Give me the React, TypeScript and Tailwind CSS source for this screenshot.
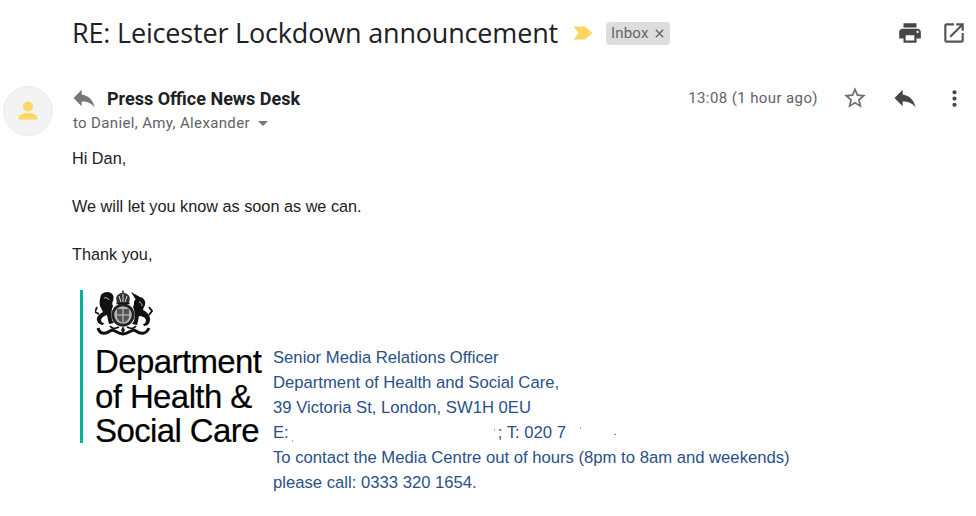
import React from "react";

const Icon = ({ d, size, color, className = "" }: { d: string; size: number; color: string; className?: string }) => (
  <svg width={size} height={size} viewBox="0 0 24 24" fill={color} className={className}>
    <path d={d} />
  </svg>
);

const REPLY = "M10 9V5l-7 7 7 7v-4.1c5 0 8.5 1.6 11 5.1-1-5-4-10-11-11z";
const STAR = "M22 9.24l-7.19-.62L12 2 9.19 8.63 2 9.24l5.46 4.73L5.82 21 12 17.27 18.18 21l-1.63-7.03L22 9.24zM12 15.4l-3.76 2.27 1-4.28-3.32-2.88 4.38-.38L12 6.1l1.71 4.04 4.38.38-3.32 2.88 1 4.28L12 15.4z";
const MORE = "M12 8c1.1 0 2-.9 2-2s-.9-2-2-2-2 .9-2 2 .9 2 2 2zm0 2c-1.1 0-2 .9-2 2s.9 2 2 2 2-.9 2-2-.9-2-2-2zm0 6c-1.1 0-2 .9-2 2s.9 2 2 2 2-.9 2-2-.9-2-2-2z";
const PRINT = "M19 8H5c-1.66 0-3 1.34-3 3v6h4v4h12v-4h4v-6c0-1.66-1.34-3-3-3zm-3 11H8v-5h8v5zm3-7c-.55 0-1-.45-1-1s.45-1 1-1 1 .45 1 1-.45 1-1 1zm-1-9H6v4h12V3z";
const OPEN = "M19 19H5V5h7V3H5c-1.11 0-2 .9-2 2v14c0 1.1.89 2 2 2h14c1.1 0 2-.9 2-2v-7h-2v7zM14 3v2h3.59l-9.83 9.83 1.41 1.41L19 6.41V10h2V3h-7z";

const Crest = () => (
  <svg width="58" height="50" viewBox="0 0 58 50" className="block blur-[0.3px]">
    {/* crown */}
    <path d="M28 0 l1.200 2 l-0.800 1 c3 0 6 2 6.500 5 l-1 6 h-11.800 l-1 -6 c0.500 -3 3.500 -5 6.500 -5 l-0.800 -1 z" fill="#333" />
    <path d="M24 6 l2 6 M28 4 v8 M32 6 l-2 6" stroke="#ddd" strokeWidth="1" />
    <path d="M21.500 13.500 h13" stroke="#111" strokeWidth="1.600" />
    {/* garter and shield */}
    <circle cx="28" cy="25" r="11.500" fill="#222" />
    <circle cx="28" cy="25" r="8.800" fill="#b5b5b5" />
    <path d="M22 19 h12 v7 c0 4 -3.500 6 -6 7 c-2.500 -1 -6 -3 -6 -7 z" fill="#555" />
    <path d="M28 19 v14 M22 25 h12" stroke="#ccc" strokeWidth="1" />
    {/* lion */}
    <path d="M6 5 c2 -3 7 -4 10 -2 c3 2 3 5 2 8 c-1 2 -1 3 0 5 c-2 4 -2 10 -1 14 l2 3 l-5 1 l-1 -4 l-1 -5 c-3 1 -5 2 -6 5 c0 2 1 3 3 3 l-1 2 c-4 0 -7 -4 -6 -7 c1 -3 4 -5 6 -6 c-1 -2 -2 -4 -3 -6 c-1 -3 0 -8 1 -11 z" fill="#111" />
    <path d="M2 17 L0 22 L4 24" stroke="#111" strokeWidth="1.800" fill="none" />
    <path d="M9 8 c2 -1 4 0 5 2" stroke="#eee" strokeWidth="0.800" fill="none" />
    {/* unicorn */}
    <path d="M41 10 L36 2 L45 7 c4 1 6 4 5 8 c-1 2 -2 4 -2 5 c4 2 7 5 7 9 c0 4 -2 7 -6 7 l-1 -2 c2 0 3 -2 3 -4 c-1 -3 -4 -4 -7 -4 l-1 5 l-1 4 l-5 -1 l2 -3 c1 -4 1 -10 -1 -14 c1 -2 1 -3 1 -5 c0 -1 1 -2 2 -3 z" fill="#111" />
    <path d="M54 17 L57 21 L54 25" stroke="#111" strokeWidth="1.800" fill="none" />
    <path d="M44 12 c2 0 3 2 3 4" stroke="#eee" strokeWidth="0.800" fill="none" />
    {/* motto ribbon */}
    <path d="M3 38 C5 45 11 44 15 41 C19 38 22 44 28 44 C34 44 37 38 41 41 C45 44 51 45 54 38" stroke="#111" strokeWidth="3" fill="none" />
    <path d="M15 36 C18 40 21 38 24 37 M41 36 C38 40 35 38 32 37" stroke="#111" strokeWidth="1.800" fill="none" />
    <path d="M28 36 L30 40 L28 44 L26 40 Z" fill="#222" />
  </svg>
);

const Speck = ({ className }: { className: string }) => <span className={`shrink-0 ${className}`} />;

export default function App() {
  return (
    <div className="w-[976px] h-[516px] overflow-hidden bg-white font-['Roboto',sans-serif]">
      {/* subject */}
      <div className="flex items-center h-[66px] pl-[72px] pr-[9px]">
        <span className="font-['Open_Sans',sans-serif] text-[27px] leading-[36px] text-[#202124] tracking-[-0.18px]">RE: Leicester Lockdown announcement</span>
        <svg width="20" height="14" viewBox="0 0 20 14" className="ml-[15px]">
          <path d="M0.500 0.500 H12 L19.500 7 L12 13.500 H0.500 L5.500 7 Z" fill="#fdd663" />
        </svg>
        <span className="ml-[13px] flex items-center h-[23px] pl-[5px] pr-[6px] rounded-[4px] bg-[#dddddd] text-[15px] text-[#666666] tracking-[0.2px]">
          Inbox
          <svg width="9" height="9" viewBox="0 0 9 9" className="ml-[6px]">
            <path d="M0.800 0.800 L8.200 8.200 M8.200 0.800 L0.800 8.200" stroke="#666666" strokeWidth="1.400" />
          </svg>
        </span>
        <Icon d={PRINT} size={26} color="#444746" className="ml-auto" />
        <Icon d={OPEN} size={26} color="#555555" className="ml-[18px]" />
      </div>

      {/* sender */}
      <div className="flex pl-[3px] pt-[20px]">
        <div className="w-[50px] h-[50px] rounded-full bg-[#f3f3f3] border border-[#f1ecdc] flex items-center justify-center shrink-0">
          <svg width="24" height="24" viewBox="0 0 24 24" fill="#fdd663">
            <circle cx="12" cy="7.500" r="5" />
            <path d="M2.500 20.500 v-2 c0 -3 5 -4.500 9.500 -4.500 s9.500 1.500 9.500 4.500 v2 z" />
          </svg>
        </div>
        <div className="ml-[20px] flex-1 pr-[9px] -mt-[1px]">
          <div className="flex items-center h-[26px]">
            <Icon d={REPLY} size={28} color="#777777" className="-ml-[3px]" />
            <span className="ml-[9px] text-[18px] font-bold text-[#202124]">Press Office News Desk</span>
            <span className="ml-auto text-[15px] text-[#5f6368] tracking-[0.4px]">13:08 (1 hour ago)</span>
            <Icon d={STAR} size={26} color="#6f6f6f" className="ml-[24px]" />
            <Icon d={REPLY} size={28} color="#444746" className="ml-[23px]" />
            <Icon d={MORE} size={25} color="#444746" className="ml-[23px]" />
          </div>
          <div className="flex items-center h-[24px] text-[15px] text-[#5f6368] tracking-[0.36px]">
            to Daniel, Amy, Alexander
            <svg width="10" height="5" viewBox="0 0 10 5" className="ml-[8px]"><path d="M0 0 H10 L5 5 Z" fill="#777777" /></svg>
          </div>
        </div>
      </div>

      {/* body */}
      <div className="pl-[72px] pt-[10px] font-['Liberation_Sans',sans-serif] text-[16.25px] leading-[24px] text-[#222222]">
        <p className="h-[48px]">Hi Dan,</p>
        <p className="h-[48px]">We will let you know as soon as we can.</p>
        <p className="h-[48px]">Thank you,</p>
      </div>

      {/* signature */}
      <div className="flex items-start pl-[80px]">
        <div className="w-[193px] h-[153px] border-l-[3px] border-[#00b39b] pl-[12px] text-black font-['Liberation_Sans',sans-serif] shrink-0">
          <Crest />
          <div className="mt-[5px] text-[33px] leading-[34.500px] tracking-[-0.6px] whitespace-nowrap [-webkit-text-stroke:0.2px_black]">
            <div>Department</div>
            <div>of Health &amp;</div>
            <div>Social Care</div>
          </div>
        </div>
        <div className="pt-[55px] font-['Liberation_Sans',sans-serif] text-[16.67px] leading-[25px] text-[#2a5087] whitespace-nowrap">
          <div>Senior Media Relations Officer</div>
          <div>Department of Health and Social Care,</div>
          <div>39 Victoria St, London, SW1H 0EU</div>
          <div className="flex">
            <span>E:</span>
            <Speck className="ml-[3px] w-[1px] h-[2px] bg-[#9db4d6] self-end mb-[3px]" />
            <Speck className="ml-[201px] w-[1px] h-[2px] bg-[#9db4d6] self-start mt-[9px]" />
            <span className="ml-[3px]">; T: 020 7</span>
            <Speck className="ml-[14px] w-[1px] h-[2px] bg-[#9db4d6] self-start mt-[7px]" />
            <Speck className="ml-[33px] w-[2px] h-[1px] bg-[#6f8bb5] self-end mb-[10px]" />
          </div>
          <div>To contact the Media Centre out of hours (8pm to 8am and weekends)</div>
          <div>please call: 0333 320 1654.</div>
        </div>
      </div>
    </div>
  );
}
